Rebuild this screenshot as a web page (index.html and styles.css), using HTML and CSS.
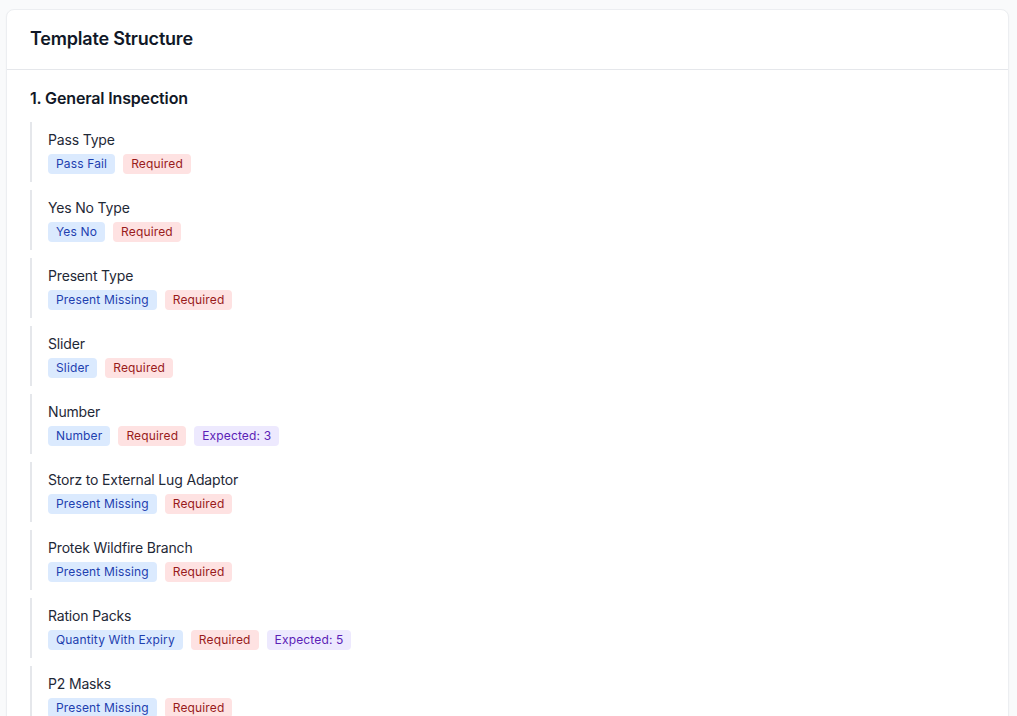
FILE: index.html
```html
<!DOCTYPE html>
<html>
<head>
<meta charset="utf-8">
<link rel="stylesheet" href="styles.css">
</head>
<body>
<div class="card">
  <div class="card-header"><h2 class="card-title">Template Structure</h2></div>
  <div class="card-body">
    <h3 class="section-title">1. General Inspection</h3>
    <div class="items">
      <div class="item"><div class="item-name">Pass Type</div><div class="badges"><span class="badge blue">Pass Fail</span><span class="badge red">Required</span></div></div>
      <div class="item"><div class="item-name">Yes No Type</div><div class="badges"><span class="badge blue">Yes No</span><span class="badge red">Required</span></div></div>
      <div class="item"><div class="item-name">Present Type</div><div class="badges"><span class="badge blue">Present Missing</span><span class="badge red">Required</span></div></div>
      <div class="item"><div class="item-name">Slider</div><div class="badges"><span class="badge blue">Slider</span><span class="badge red">Required</span></div></div>
      <div class="item"><div class="item-name">Number</div><div class="badges"><span class="badge blue">Number</span><span class="badge red">Required</span><span class="badge purple">Expected: 3</span></div></div>
      <div class="item"><div class="item-name">Storz to External Lug Adaptor</div><div class="badges"><span class="badge blue">Present Missing</span><span class="badge red">Required</span></div></div>
      <div class="item"><div class="item-name">Protek Wildfire Branch</div><div class="badges"><span class="badge blue">Present Missing</span><span class="badge red">Required</span></div></div>
      <div class="item"><div class="item-name">Ration Packs</div><div class="badges"><span class="badge blue">Quantity With Expiry</span><span class="badge red">Required</span><span class="badge purple">Expected: 5</span></div></div>
      <div class="item"><div class="item-name">P2 Masks</div><div class="badges"><span class="badge blue">Present Missing</span><span class="badge red">Required</span></div></div>
    </div>
  </div>
</div>
</body>
</html>
```
FILE: styles.css
```css
html, body {
  margin: 0;
  padding: 0;
  background: #f9fafb;
  font-family: Inter, "Noto Sans", sans-serif;
  color: #111827;
  overflow: hidden;
}
body {
  padding: 9px 8px 0 6px;
}
.card {
  background: #ffffff;
  border: 1px solid #eceef1;
  border-radius: 8px;
  box-shadow: 0 1px 2px rgba(0,0,0,0.04);
}
.card-header {
  padding: 15px 24px 16px 23px;
  border-bottom: 1px solid #e5e7eb;
}
.card-title {
  margin: 0;
  font-size: 18px;
  line-height: 28px;
  font-weight: 600;
  letter-spacing: -0.2px;
  color: #111827;
}
.card-body {
  padding: 16px 23px 24px 23px;
}
.section-title {
  margin: 0 0 12px 0;
  font-size: 16px;
  line-height: 24px;
  font-weight: 600;
  letter-spacing: -0.15px;
  color: #111827;
}
.items {
  display: flex;
  flex-direction: column;
  gap: 8px;
}
.item {
  border-left: 2px solid #e5e7eb;
  padding: 8px 16px 8px 16px;
}
.item-name {
  font-size: 14px;
  line-height: 20px;
  letter-spacing: -0.17px;
  color: #1f2937;
  margin-bottom: 4px;
}
.badges {
  display: flex;
  gap: 8px;
}
.badge {
  display: inline-block;
  font-size: 12px;
  line-height: 20px;
  height: 20px;
  padding: 0 8px;
  letter-spacing: 0.15px;
  border-radius: 4px;
}
.blue { background: #dbeafe; color: #1e40af; }
.red { background: #fee2e2; color: #991b1b; }
.purple { background: #ede9fe; color: #5b21b6; }
```
